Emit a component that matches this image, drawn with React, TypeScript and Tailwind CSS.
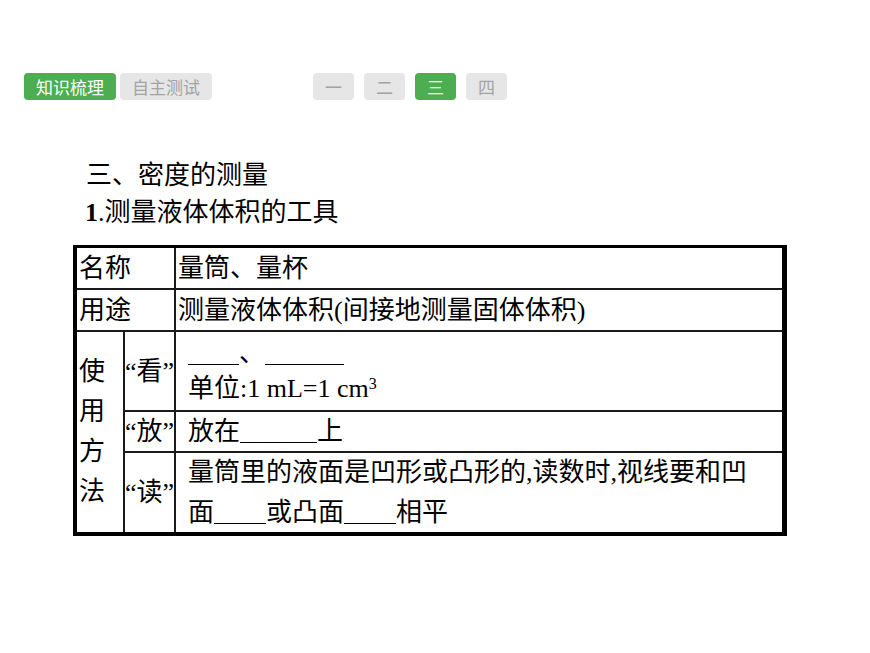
const serif = "font-['Liberation_Serif','Noto_Sans_CJK_SC',serif]";

const Blank = ({ w }: { w: number }) => (
  <span
    className="inline-block border-b border-black align-baseline h-[1px] translate-y-[3px]"
    style={{ width: w }}
  />
);

const Tab = ({ label, active, wide }: { label: string; active?: boolean; wide?: boolean }) => (
  <div
    className={`h-[27px] flex items-center justify-center rounded-[4px] text-[17px] ${
      wide ? "w-[92px]" : "w-[41px]"
    } ${active ? "bg-[#4cae50] text-white" : "bg-[#e6e6e6] text-[#a3a3a3]"}`}
  >
    {label}
  </div>
);

export default function App() {
  return (
    <div className="w-[870px] h-[653px] bg-white text-black overflow-hidden">
      {/* top tabs */}
      <div className="pt-[73px] pl-[24px] flex font-['Noto_Sans_CJK_SC',sans-serif]">
        <div className="flex gap-[4px]">
          <Tab label="知识梳理" active wide />
          <Tab label="自主测试" wide />
        </div>
        <div className="flex gap-[10px] ml-[101px]">
          <Tab label="一" />
          <Tab label="二" />
          <Tab label="三" active />
          <Tab label="四" />
        </div>
      </div>

      {/* headings */}
      <div className={`mt-[57px] pl-[86px] text-[26px] leading-[37px] ${serif}`}>
        <div>三、密度的测量</div>
        <div className="-ml-[1px]">
          <span className="font-bold">1</span>.测量液体体积的工具
        </div>
      </div>

      {/* table */}
      <div className="mt-[14px] ml-[73px] w-[714px] border-t-[3px] border-l-4 border-r-[5px] border-b-4 border-black">
        <div
          className={`grid grid-cols-[46px_49px_606px] grid-rows-[40px_40px_78px_39px_79px] gap-[2px] bg-[#1a1a1a] text-[26px] ${serif}`}
        >
          <div className="col-span-2 bg-white flex items-center pl-[2px]">名称</div>
          <div className="bg-white flex items-center pl-[2px]">量筒、量杯</div>

          <div className="col-span-2 bg-white flex items-center pl-[2px]">用途</div>
          <div className="bg-white flex items-center pl-[2px]">测量液体体积(间接地测量固体体积)</div>

          <div className="row-span-3 bg-white flex flex-col justify-center pl-[2px] leading-[40px]">
            <span>使</span>
            <span>用</span>
            <span>方</span>
            <span>法</span>
          </div>

          <div className="bg-white flex items-center whitespace-nowrap">“看”</div>
          <div className="bg-white flex flex-col pt-[6px] pl-[12px] leading-[32px]">
            <div>
              <Blank w={51} />
              <span className="inline-block w-[26px]">、</span>
              <Blank w={79} />
            </div>
            <div className="mt-[3px]">
              单位:1 mL=1 cm<sup className="text-[16px]">3</sup>
            </div>
          </div>

          <div className="bg-white flex items-center whitespace-nowrap">“放”</div>
          <div className="bg-white flex items-center pl-[12px]">
            <span>
              放在
              <Blank w={77} />
              上
            </span>
          </div>

          <div className="bg-white flex items-center whitespace-nowrap">“读”</div>
          <div className="bg-white flex flex-col justify-center pl-[12px] leading-[40px] whitespace-nowrap">
            <div>量筒里的液面是凹形或凸形的,读数时,视线要和凹</div>
            <div>
              面<Blank w={52} />或凸面<Blank w={52} />相平
            </div>
          </div>
        </div>
      </div>
    </div>
  );
}
